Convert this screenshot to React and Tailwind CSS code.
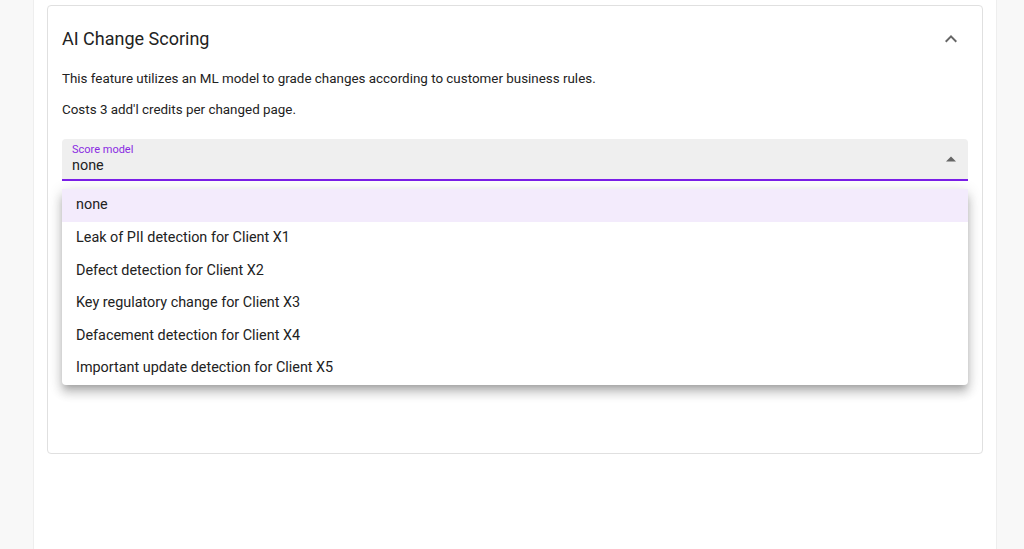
export default function App() {
  const items = [
    "none",
    "Leak of PII detection for Client X1",
    "Defect detection for Client X2",
    "Key regulatory change for Client X3",
    "Defacement detection for Client X4",
    "Important update detection for Client X5",
  ];
  return (
    <div className="w-[1024px] h-[549px] bg-[#f8f8f8] overflow-hidden" style={{ fontFamily: "Roboto, 'Noto Sans', sans-serif" }}>
      <div className="ml-[33px] w-[964px] h-full bg-white border-x border-[#eeeeee] pt-[5px] px-[13px]">
        <div className="relative h-[449px] border border-[#e0e0e0] rounded-[4px] px-[14px]">
          <div className="flex items-center justify-between h-[64px] pr-[5px] pt-[1px]">
            <span className="text-[18px] text-[#222]">AI Change Scoring</span>
            <svg width="24" height="24" viewBox="0 0 24 24" className="text-[#666]"><path d="M7.41 15.41 12 10.83l4.59 4.58L18 14l-6-6-6 6z" fill="currentColor" /></svg>
          </div>
          <p className="text-[13.4px] text-[#222] leading-[16px] mt-[1px]">This feature utilizes an ML model to grade changes according to customer business rules.</p>
          <p className="text-[13.4px] text-[#222] leading-[16px] mt-[15px]">Costs 3 add'l credits per changed page.</p>
          <div className="mt-[21px] relative h-[42px] bg-[#efefef] rounded-t-[4px] border-b-2 border-[#7b1fe8] px-[10px] pt-[4px]">
            <div className="text-[11px] text-[#8a2be2] leading-[13px]">Score model</div>
            <div className="text-[14.4px] text-[#222] leading-[20px]">none</div>
            <svg width="10" height="6" viewBox="0 0 10 5" className="absolute right-[12px] top-[17px] text-[#666]"><path d="M0 5 5 0 10 5z" fill="currentColor" /></svg>
          </div>
          <div className="absolute left-[14px] right-[14px] top-[183px] py-0 bg-white rounded-[4px] shadow-[0_5px_6px_-3px_rgba(0,0,0,0.2),0_8px_10px_1px_rgba(0,0,0,0.14),0_3px_14px_2px_rgba(0,0,0,0.12)]">
            {items.map((t, i) => (
              <div key={t} className={`h-[32.6px] flex items-center px-[14px] text-[14.4px] text-[#222] ${i === 0 ? "bg-[#f3ebfc]" : ""}`}>{t}</div>
            ))}
          </div>
        </div>
      </div>
    </div>
  );
}
